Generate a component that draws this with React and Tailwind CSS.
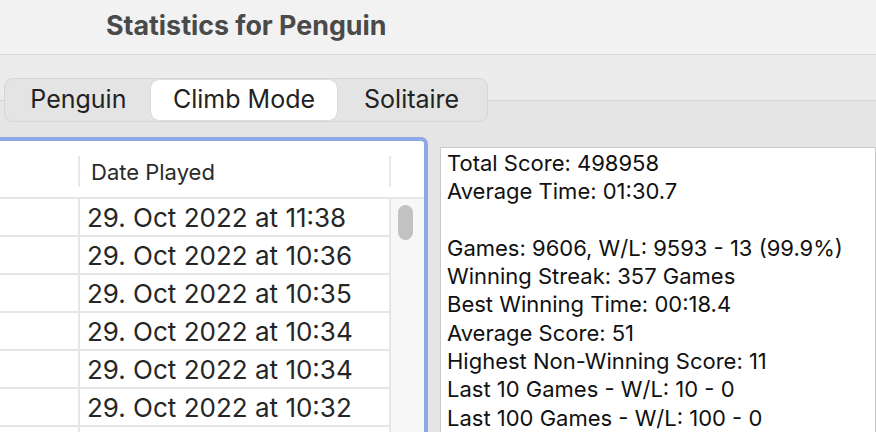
import React from 'react';

const dates = [
  '29. Oct 2022 at 11:38',
  '29. Oct 2022 at 10:36',
  '29. Oct 2022 at 10:35',
  '29. Oct 2022 at 10:34',
  '29. Oct 2022 at 10:34',
  '29. Oct 2022 at 10:32',
  '',
];

const stats = [
  'Total Score: 498958',
  'Average Time: 01:30.7',
  '',
  'Games: 9606, W/L: 9593 - 13 (99.9%)',
  'Winning Streak: 357 Games',
  'Best Winning Time: 00:18.4',
  'Average Score: 51',
  'Highest Non-Winning Score: 11',
  'Last 10 Games - W/L: 10 - 0',
  'Last 100 Games - W/L: 100 - 0',
];

function TitleBar() {
  return (
    <div className="h-[55px] bg-[#f2f2f2] border-b border-[#d9d9d9] flex items-center pl-[106px]">
      <h1 className="text-[26.8px] font-bold text-[#4a4a4a] pb-[3px]">
        Statistics for Penguin
      </h1>
    </div>
  );
}

function TabControl() {
  const tabs = [
    {label: 'Penguin', w: 'w-[146px]'},
    {label: 'Climb Mode', w: 'w-[188px]', active: true},
    {label: 'Solitaire', w: 'w-[150px]'},
  ];
  return (
    <div className="relative z-10 -mb-[22px] ml-[4px] flex h-[44px] w-[484px] items-center rounded-[9px] border border-[#d6d6d6] bg-[#e4e4e4] px-[1px]">
      {tabs.map((tab) => (
        <div
          key={tab.label}
          className={`${tab.w} h-[40px] flex items-center justify-center rounded-[8px] text-[25px] text-[#222] ${
            tab.active ? 'bg-white shadow-[0_0_1px_rgba(0,0,0,0.25)]' : ''
          }`}
        >
          {tab.label}
        </div>
      ))}
    </div>
  );
}

function GamesTable() {
  return (
    <div className="-ml-[20px] w-[448px] shrink-0 h-[320px] rounded-t-[7px] border-4 border-b-0 border-[#8eaae6] bg-white overflow-hidden">
      <div className="flex h-[58px] border-b-2 border-[#e6e6e6] pt-[4px]">
        <div className="w-[96px] flex items-center justify-end">
          <div className="h-[31px] w-[2px] bg-[#e8e8e8]" />
        </div>
        <div className="w-[309px] flex items-center pl-[11px] pt-[2px] text-[22px] text-[#2a2a2a]">
          Date Played
        </div>
        <div className="flex items-center">
          <div className="h-[31px] w-[2px] bg-[#e8e8e8]" />
        </div>
        <div className="flex-1" />
      </div>
      <div className="flex">
        <div className="flex flex-col">
          {dates.map((d, i) => (
            <div key={i} className="flex h-[38px] border-b-2 border-[#e6e6e6]">
              <div className="w-[96px] border-r-2 border-[#e6e6e6]" />
              <div className="w-[309px] flex items-center pl-[7px] text-[26px] text-[#262626]">
                {d}
              </div>
            </div>
          ))}
        </div>
        <div className="flex-1 border-l-2 border-[#e6e6e6] bg-[#f7f7f7] pt-[6px] pl-[7px]">
          <div className="h-[35px] w-[15px] rounded-full bg-[#c2c2c2]" />
        </div>
      </div>
    </div>
  );
}

function StatsPanel() {
  return (
    <div className="mt-[10px] flex-1 h-[300px] border border-[#c9c9c9] bg-white pl-[6px] pt-[1px] text-[22px] leading-[28.3px] text-[#111]">
      {stats.map((s, i) => (
        <div key={i} className="h-[28.3px] whitespace-nowrap">
          {s}
        </div>
      ))}
    </div>
  );
}

export default function App() {
  return (
    <div className="h-[432px] w-[876px] overflow-hidden bg-[#e5e5e5] font-['Inter',sans-serif]">
      <TitleBar />
      <div className="bg-[#ececec] pt-[23px]">
        <TabControl />
      </div>
      <div className="border-t border-[#d6d6d6] bg-[#e5e5e5] pt-[36px] flex gap-[12px]">
        <GamesTable />
        <StatsPanel />
      </div>
    </div>
  );
}
